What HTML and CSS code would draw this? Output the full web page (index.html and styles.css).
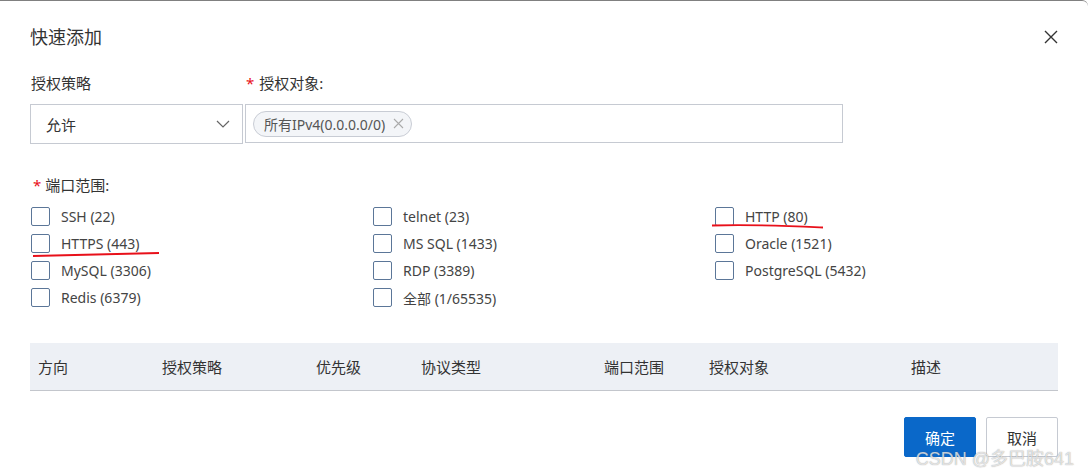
FILE: index.html
```html
<!DOCTYPE html>
<html lang="zh-CN">
<head>
    <meta charset="UTF-8">
    <title>快速添加</title>
    <link rel="stylesheet" href="styles.css">
</head>
<body>
    <div class="dialog">
        <div class="dialog-header">
            <h2>快速添加</h2>
            <button class="close" aria-label="关闭">
                <svg width="14" height="14" viewBox="0 0 14 14"><path d="M1 1L13 13M13 1L1 13" stroke="#333" stroke-width="1.4" fill="none"/></svg>
            </button>
        </div>

        <div class="form-row">
            <div class="field field-policy">
                <div class="field-label">授权策略</div>
                <div class="select">
                    <span>允许</span>
                    <svg width="14" height="8" viewBox="0 0 14 8"><path d="M1 1L7 7L13 1" stroke="#666" stroke-width="1.2" fill="none"/></svg>
                </div>
            </div>
            <div class="field field-target">
                <div class="field-label"><span class="req">*</span>授权对象:</div>
                <div class="tag-input">
                    <span class="tag">所有IPv4(0.0.0.0/0)
                        <svg width="11" height="11" viewBox="0 0 11 11"><path d="M1 1L10 10M10 1L1 10" stroke="#aaa" stroke-width="1.1" fill="none"/></svg>
                    </span>
                </div>
            </div>
        </div>

        <div class="ports">
            <div class="field-label ports-label"><span class="req">*</span>端口范围:</div>
            <div class="port-grid">
                <label class="port"><span class="box"></span>SSH (22)</label>
                <label class="port"><span class="box"></span>telnet (23)</label>
                <label class="port"><span class="box"></span>HTTP (80)</label>
                <label class="port"><span class="box"></span>HTTPS (443)</label>
                <label class="port"><span class="box"></span>MS SQL (1433)</label>
                <label class="port"><span class="box"></span>Oracle (1521)</label>
                <label class="port"><span class="box"></span>MySQL (3306)</label>
                <label class="port"><span class="box"></span>RDP (3389)</label>
                <label class="port"><span class="box"></span>PostgreSQL (5432)</label>
                <label class="port"><span class="box"></span>Redis (6379)</label>
                <label class="port"><span class="box"></span>全部 (1/65535)</label>
                <!-- 手画的红线标注 -->
                <svg class="marks" viewBox="0 0 1027 108" preserveAspectRatio="none">
                    <path d="M2 53 C40 52 90 51 128 50" stroke="#e8101a" stroke-width="1.8" fill="none"/>
                    <path d="M681 22.5 C720 21 760 23 792 24.5" stroke="#e8101a" stroke-width="1.8" fill="none"/>
                </svg>
            </div>
        </div>

        <table class="rules">
            <thead>
                <tr>
                    <th class="c1">方向</th>
                    <th class="c2">授权策略</th>
                    <th class="c3">优先级</th>
                    <th class="c4">协议类型</th>
                    <th class="c5">端口范围</th>
                    <th class="c6">授权对象</th>
                    <th>描述</th>
                </tr>
            </thead>
        </table>

        <div class="footer">
            <button class="btn btn-primary">确定</button>
            <button class="btn">取消</button>
        </div>

        <div class="watermark">CSDN @多巴胺641</div>
    </div>
</body>
</html>
```

FILE: styles.css
```css
body {
    margin: 0;
    font-family: "Noto Sans", "Noto Sans CJK SC", sans-serif;
    color: #333;
    background-color: #fff;
}
.dialog {
    position: relative;
    height: 476px;
    box-sizing: border-box;
    padding: 0 30px;
    border-top: 1px solid #808080;
    border-top-right-radius: 6px;
    overflow: hidden;
}
.dialog-header {
    display: flex;
    justify-content: space-between;
    align-items: center;
    padding-top: 25px;
    height: 22px;
}
.dialog-header h2 {
    margin: 0;
    font-size: 18px;
    font-weight: normal;
    line-height: 22px;
    color: #333;
}
.close {
    border: none;
    background: none;
    padding: 0;
    width: 14px;
    height: 14px;
    display: flex;
    cursor: pointer;
}
.form-row {
    display: flex;
    gap: 2px;
    margin-top: 25px;
}
.field-label {
    font-size: 15px;
    line-height: 20px;
    height: 20px;
    color: #333;
    margin-bottom: 11px;
}
.req {
    color: #e8101a;
    margin-right: 5px;
    margin-left: 1px;
}
.field-policy {
    width: 213px;
}
.field-policy .field-label {
    margin-left: 1px;
}
.field-target {
    width: 598px;
}
.select {
    height: 40px;
    box-sizing: border-box;
    border: 1px solid #c6cad2;
    display: flex;
    align-items: center;
    justify-content: space-between;
    padding: 0 12px 0 15px;
    font-size: 15px;
    color: #333;
}
.tag-input {
    height: 39px;
    box-sizing: border-box;
    border: 1px solid #c6cad2;
    display: flex;
    align-items: center;
    padding: 0 7px;
}
.tag {
    display: flex;
    align-items: center;
    gap: 8px;
    height: 26px;
    box-sizing: border-box;
    border: 1px solid #c8ccd4;
    border-radius: 13px;
    background-color: #f3f5f8;
    padding: 0 7px 0 10px;
    font-size: 14px;
    color: #555;
}
.ports-label {
    margin-top: 31px;
    margin-left: 3px;
}
.ports-label .req {
    margin-left: 0;
    margin-right: 4px;
}
.port-grid {
    position: relative;
    display: grid;
    grid-template-columns: repeat(3, 342px);
    grid-auto-rows: 27px;
    margin: -3px 0 0 1px;
}
.port {
    display: flex;
    align-items: center;
    font-size: 14px;
    color: #444;
}
.box {
    width: 19px;
    height: 19px;
    box-sizing: border-box;
    border: 1px solid #5b7698;
    border-radius: 2px;
    margin-right: 11px;
}
.marks {
    position: absolute;
    left: 0;
    top: 0;
    width: 1027px;
    height: 108px;
    pointer-events: none;
}
.rules {
    width: 100%;
    margin-top: 32px;
    border-collapse: collapse;
    table-layout: fixed;
}
.rules th {
    height: 47px;
    padding: 0 0 0 8px;
    text-align: left;
    font-size: 15px;
    font-weight: normal;
    color: #333;
    background-color: #edf0f5;
    border-bottom: 1px solid #c3c6cc;
}
.rules .c1 { width: 116px; }
.rules .c2 { width: 146px; }
.rules .c3 { width: 97px; }
.rules .c4 { width: 175px; }
.rules .c5 { width: 97px; }
.rules .c6 { width: 194px; }
.footer {
    display: flex;
    justify-content: flex-end;
    gap: 10px;
    margin-top: 26px;
}
.btn {
    width: 72px;
    height: 40px;
    border: 1px solid #c6cad2;
    background-color: #fff;
    color: #333;
    font-family: inherit;
    font-size: 15px;
    border-radius: 2px;
    cursor: pointer;
}
.btn-primary {
    background-color: #0a68c9;
    border-color: #0a68c9;
    color: #fff;
}
.watermark {
    position: absolute;
    right: 14px;
    bottom: 7px;
    font-family: "Liberation Sans", "Noto Sans CJK SC", sans-serif;
    font-size: 18px;
    line-height: 20px;
    color: rgba(255, 255, 255, 0.7);
    text-shadow: 0 0 1px rgba(100, 100, 100, 0.7);
    pointer-events: none;
}
```
